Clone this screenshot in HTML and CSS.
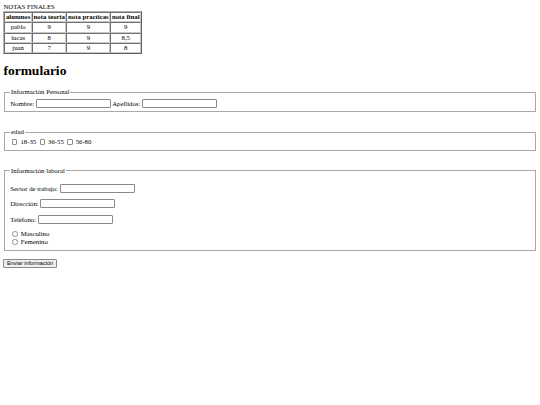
FILE: index.html
```html
<!DOCTYPE html>
<html lang="es">
<head>
<meta charset="utf-8">
<title>Notas</title>
<link rel="stylesheet" href="styles.css">
</head>
<body class="page">
<div class="title">NOTAS FINALES</div>
<table class="grades">
  <tr><th>alumnos</th><th>nota teoria</th><th>nota practicas</th><th>nota final</th></tr>
  <tr><td>pablo</td><td>9</td><td>9</td><td>9</td></tr>
  <tr><td>lucas</td><td>8</td><td>9</td><td>8,5</td></tr>
  <tr><td>juan</td><td>7</td><td>9</td><td>8</td></tr>
</table>
<h1 class="heading">formulario</h1>
<form class="form">
  <fieldset class="group">
    <legend class="legend">Información Personal</legend>
    Nombre: <input class="field" type="text"> Apellidos: <input class="field" type="text">
  </fieldset>
  <br><br>
  <fieldset class="group">
    <legend class="legend">edad</legend>
    <input class="check" type="checkbox"> 18-35 <input class="check" type="checkbox"> 36-55 <input class="check" type="checkbox"> 56-80
  </fieldset>
  <br><br>
  <fieldset class="group">
    <legend class="legend">Información laboral</legend>
    <p class="row">Sector de trabajo: <input class="field" type="text"></p>
    <p class="row">Dirección: <input class="field" type="text"></p>
    <p class="row">Teléfono: <input class="field" type="text"></p>
    <input class="radio" type="radio" name="sexo"> Masculino<br>
    <input class="radio" type="radio" name="sexo"> Femenino
  </fieldset>
  <br>
  <input class="button" type="submit" value="Enviar información">
</form>
</body>
</html>
```

FILE: styles.css
```css
.page {
  margin: 3.4px;
  font-family: "Liberation Serif", "Times New Roman", serif;
  font-size: 6.75px;
  background: #fff;
  color: #000;
}
.title {
  line-height: 7.8px;
}
.grades {
  border-collapse: separate;
  border-spacing: 0.85px;
  border: 1px solid;
  border-color: #b0b0b0 #606060 #606060 #b0b0b0;
  font-size: 6.75px;
}
.grades th,
.grades td {
  padding: 0 0.6px;
  line-height: 8.3px;
  border: 1px solid;
  border-color: #707070 #c8c8c8 #c8c8c8 #707070;
  text-align: center;
  font-size: 6.75px;
  white-space: nowrap;
}
.grades th {
  font-weight: bold;
}
.heading {
  font-size: 13.5px;
  margin: 9px 0;
  font-weight: bold;
}
.form {
  margin: 0;
  line-height: 8px;
}
.group {
  margin: 0 0.85px;
  padding: 2.2px 5px 3.6px;
  border: 1px solid #a8a8a8;
  min-width: 0;
}
.legend {
  padding: 0 0.85px;
}
.row {
  margin: 6.5px 0;
}
.field {
  box-sizing: border-box;
  width: 75px;
  height: 9px;
  padding: 0 1px;
  margin: 0;
  border: 1px solid #8a8a8a;
  border-radius: 1px;
  font-size: 5.6px;
  background: #fff;
  vertical-align: baseline;
}
.check,
.radio {
  appearance: none;
  box-sizing: border-box;
  width: 5.5px;
  height: 5.5px;
  margin: 0 1.3px 0 1.7px;
  border: 1px solid #8f8f8f;
  border-radius: 1px;
  background: #fff;
  vertical-align: -0.6px;
}
.radio {
  margin: 0 1.3px 0 2.1px;
  border-radius: 50%;
}
.button {
  box-sizing: border-box;
  height: 9px;
  font-family: "Liberation Sans", Arial, sans-serif;
  font-size: 5.6px;
  line-height: 6px;
  padding: 0 2.5px;
  margin: 0;
  border: 1px solid #8a8a8a;
  border-radius: 1px;
  background: #efefef;
  color: #000;
  vertical-align: top;
}
```
